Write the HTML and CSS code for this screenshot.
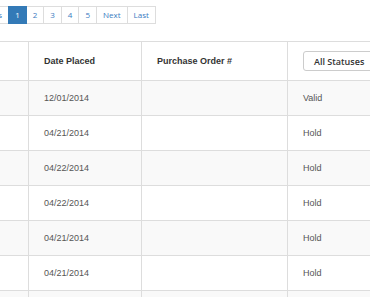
FILE: index.html
```html
<!DOCTYPE html>
<html lang="en">
<head>
<meta charset="UTF-8">
<meta name="viewport" content="width=device-width, initial-scale=1.0">
<title>Orders</title>
<link rel="stylesheet" href="styles.css">
</head>
<body>
<ul class="pagination">
  <li><a href="#">Previous</a></li>
  <li class="active"><a href="#">1</a></li>
  <li><a href="#">2</a></li>
  <li><a href="#">3</a></li>
  <li><a href="#">4</a></li>
  <li><a href="#">5</a></li>
  <li><a href="#">Next</a></li>
  <li><a href="#">Last</a></li>
</ul>

<div class="table-wrap">
  <table class="orders">
    <colgroup>
      <col class="col-order">
      <col class="col-date">
      <col class="col-po">
      <col class="col-status">
    </colgroup>
    <thead>
      <tr>
        <th></th>
        <th>Date Placed</th>
        <th>Purchase Order #</th>
        <th><button class="status-btn">All Statuses</button></th>
      </tr>
    </thead>
    <tbody>
      <tr><td></td><td>12/01/2014</td><td></td><td>Valid</td></tr>
      <tr><td></td><td>04/21/2014</td><td></td><td>Hold</td></tr>
      <tr><td></td><td>04/22/2014</td><td></td><td>Hold</td></tr>
      <tr><td></td><td>04/22/2014</td><td></td><td>Hold</td></tr>
      <tr><td></td><td>04/21/2014</td><td></td><td>Hold</td></tr>
      <tr><td></td><td>04/21/2014</td><td></td><td>Hold</td></tr>
      <tr><td></td><td></td><td></td><td></td></tr>
    </tbody>
  </table>
</div>
</body>
</html>
```

FILE: styles.css
```css
body {
  margin: 0;
  padding: 0;
  overflow: hidden;
  background: #fff;
  font-family: "Liberation Sans", Arial, sans-serif;
}

.pagination {
  display: flex;
  list-style: none;
  margin: 6px 0 0 -36px;
  padding: 0;
  font-family: "Open Sans", sans-serif;
  font-size: 8px;
}

.pagination a {
  display: block;
  padding: 0 6px;
  line-height: 16px;
  color: #3a7bbf;
  text-decoration: none;
  border: 1px solid #ddd;
  margin-left: -1px;
  background: #fff;
}

.pagination .active a {
  background: #337ab7;
  border-color: #337ab7;
  color: #fff;
  position: relative;
}

.table-wrap {
  margin: 17px 0 0 -40px;
}

.orders {
  border-collapse: collapse;
  table-layout: fixed;
  width: 520px;
  font-size: 9px;
  color: #555;
}

.col-order { width: 68px; }
.col-date { width: 113px; }
.col-po { width: 146px; }
.col-status { width: 193px; }

.orders th,
.orders td {
  border: 1px solid #ddd;
  padding: 8px 15px;
  line-height: 18px;
  text-align: left;
  vertical-align: middle;
}

.orders th {
  color: #333;
  font-weight: bold;
  padding: 9px 15px;
  line-height: 20px;
}

.orders tbody tr:nth-child(odd) {
  background: #f9f9f9;
}

.status-btn {
  display: block;
  height: 20px;
  width: 110px;
  padding: 0 10px;
  text-align: left;
  font-family: "Open Sans", sans-serif;
  font-size: 9px;
  font-weight: 600;
  color: #333;
  background: #fff;
  border: 1px solid #ccc;
  border-radius: 3px;
}
```
